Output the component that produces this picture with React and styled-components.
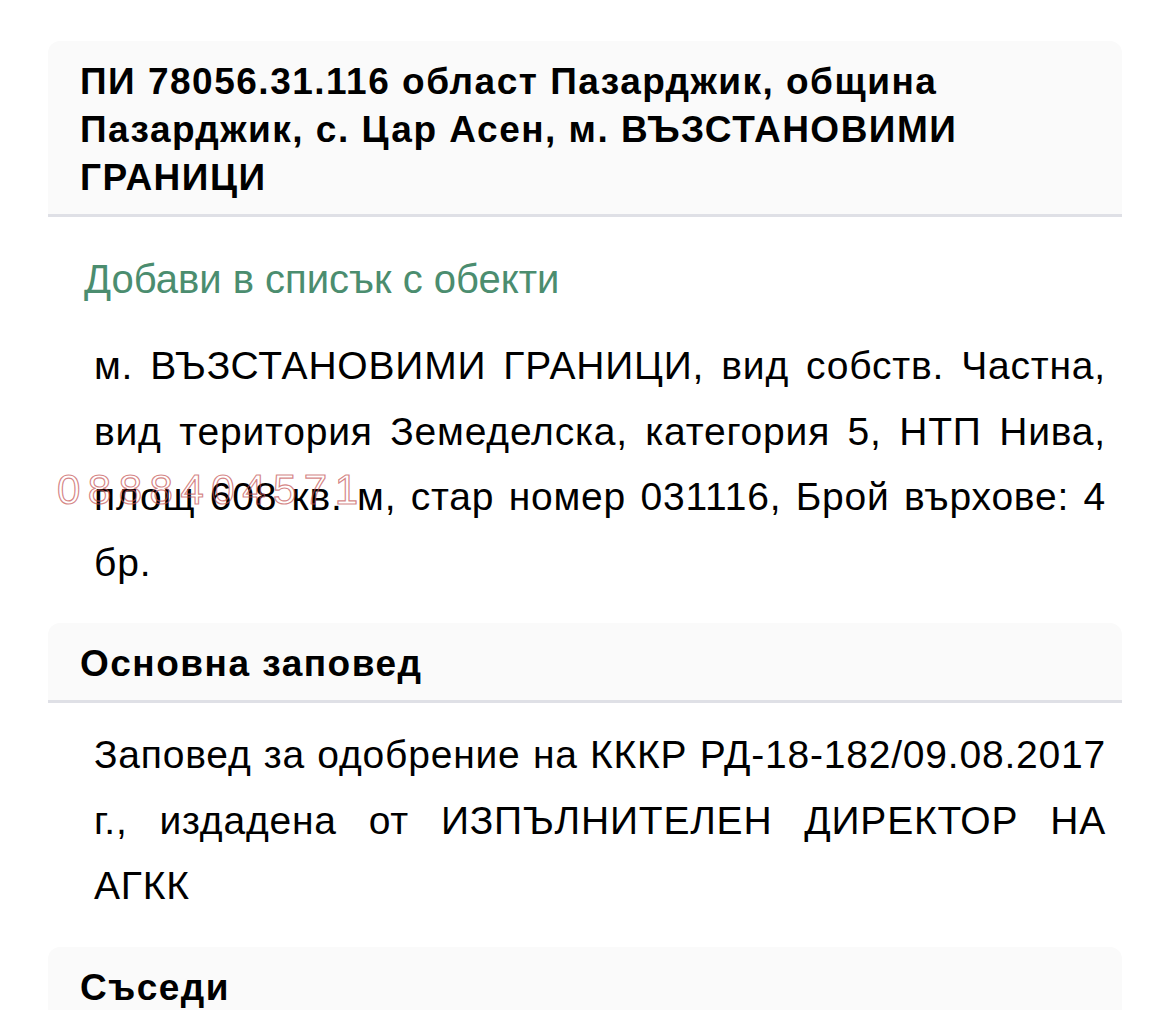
import React from "react";
import styled, { createGlobalStyle } from "styled-components";

const GlobalStyle = createGlobalStyle`
  html, body {
    margin: 0;
    padding: 0;
    background: #ffffff;
  }
  body {
    font-family: "Liberation Sans", Arial, Helvetica, sans-serif;
    color: #000;
  }
`;

const Page = styled.div`
  padding: 41px 48px 0 48px;
  width: 1074px;
`;

const Card = styled.section`
  display: flex;
  flex-direction: column;
  margin-bottom: ${(p) => p.gap || 0}px;
`;

const CardHeader = styled.div`
  background: #fafafa;
  border-radius: 12px 12px 0 0;
  border-bottom: 3px solid #dfe0e6;
  padding: 17px 32px 12px;
`;

const Title = styled.h2`
  margin: 0;
  font-size: 37px;
  line-height: 48px;
  letter-spacing: 1.5px;
  font-weight: 700;
`;

const AddLink = styled.a`
  display: block;
  color: #4b8d6f;
  font-size: 40px;
  line-height: 48px;
  text-decoration: none;
  padding: 38px 36px 0;
  cursor: pointer;
`;

const Body = styled.div`
  position: relative;
  padding: ${(p) => p.top || 30}px 16px 0 46px;
`;

const Text = styled.p`
  margin: 0;
  font-size: 39px;
  line-height: 65.5px;
  letter-spacing: 0.8px;
  text-align: justify;
`;

const Watermark = styled.span`
  position: absolute;
  left: ${(p) => p.x}px;
  top: ${(p) => p.y}px;
  font-size: 42px;
  line-height: 48px;
  letter-spacing: 7.5px;
  color: transparent;
  -webkit-text-stroke: 1.2px rgba(195, 80, 80, 0.7);
  pointer-events: none;
  white-space: nowrap;
`;

export default function App() {
  return (
    <>
      <GlobalStyle />
      <Page>
        <Card gap={28}>
          <CardHeader>
            <Title>
              ПИ 78056.31.116 област Пазарджик, община Пазарджик, с. Цар
              Асен, м. ВЪЗСТАНОВИМИ ГРАНИЦИ
            </Title>
          </CardHeader>
          <AddLink>Добави в списък с обекти</AddLink>
          <Body>
            <Text>
              м. ВЪЗСТАНОВИМИ ГРАНИЦИ, вид собств. Частна, вид територия
              Земеделска, категория 5, НТП Нива, площ 608 кв. м, стар номер
              031116, Брой върхове: 4 бр.
            </Text>
            <Watermark x={9} y={163}>0888404571</Watermark>
          </Body>
        </Card>
        <Card gap={28}>
          <CardHeader>
            <Title>Основна заповед</Title>
          </CardHeader>
          <Body top={19}>
            <Text>
              Заповед за одобрение на КККР РД-18-182/09.08.2017 г., издадена
              от ИЗПЪЛНИТЕЛЕН ДИРЕКТОР НА АГКК
            </Text>
          </Body>
        </Card>
        <Card>
          <CardHeader>
            <Title>Съседи</Title>
          </CardHeader>
        </Card>
      </Page>
    </>
  );
}
